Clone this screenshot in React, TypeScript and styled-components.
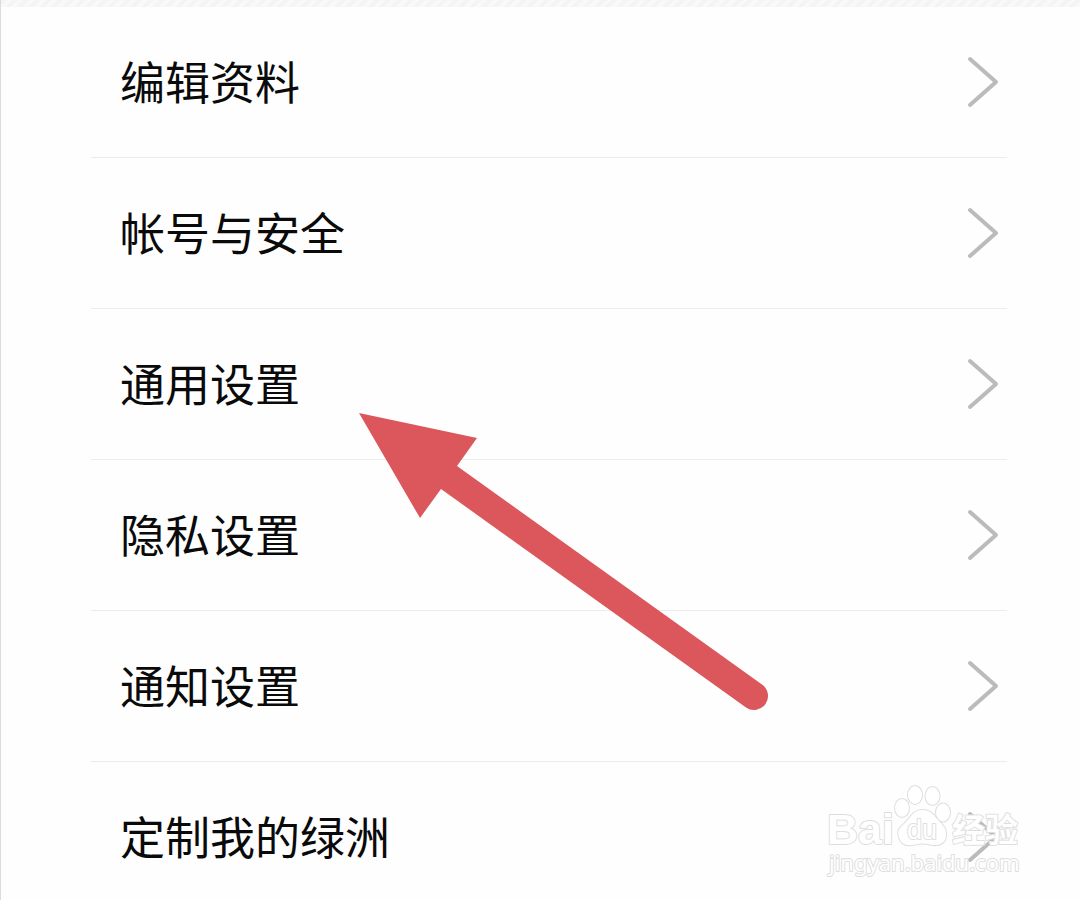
import React from "react";
import styled, { createGlobalStyle } from "styled-components";

const GlobalStyle = createGlobalStyle`
  *, *::before, *::after { box-sizing: border-box; }
  body {
    margin: 0;
    background: #fefefe;
    color: #0a0a0a;
    font-family: "Noto Sans CJK SC", sans-serif;
  }
`;

const Page = styled.main`
  position: relative;
  height: 100vh;
  overflow: hidden;
  border-left: 1px solid #dcdcdc;
`;

const HatchedStrip = styled.div`
  height: 7px;
  background: repeating-linear-gradient(135deg, #f4f4f4 0 4px, #f9f9f9 4px 8px);
`;

const SettingsList = styled.ul`
  list-style: none;
  margin: 0;
  padding: 0 73px 0 90px;
`;

const SettingsItem = styled.li`
  border-bottom: 1px solid #ebeded;
`;

const SettingsLink = styled.a`
  display: flex;
  align-items: center;
  justify-content: space-between;
  height: 150px;
  padding: 0 8px 0 29px;
  color: inherit;
  font-size: 45px;
  line-height: 66px;
  text-decoration: none;
`;

const Label = styled.span`
  padding-bottom: 2px;
`;

const Chevron = styled.svg`
  flex: none;
  width: 32px;
  height: 52px;
  fill: none;
  stroke: #bbbbbb;
  stroke-width: 4;
  stroke-linecap: round;
  stroke-linejoin: round;
`;

const Pointer = styled.svg`
  position: absolute;
  left: 357px;
  top: 412px;
  width: 412px;
  height: 300px;
  fill: #db575c;
  pointer-events: none;
`;

const Watermark = styled.svg`
  position: absolute;
  right: 50px;
  bottom: 16px;
  width: 210px;
  height: 104px;
  fill: #ffffff;
  stroke: #dedede;
  stroke-width: 2;
  stroke-linejoin: round;
  paint-order: stroke;
  pointer-events: none;
`;

const BrandText = styled.text`
  font: 700 43px "Liberation Sans", sans-serif;
`;

const PawText = styled.text`
  font: 400 27px "Liberation Sans", sans-serif;
`;

const TopicText = styled.text`
  font: 700 33px "Noto Sans CJK SC", sans-serif;
`;

const DomainText = styled.text`
  font: 400 22px "Noto Sans", sans-serif;
`;

const items = ["编辑资料", "帐号与安全", "通用设置", "隐私设置", "通知设置", "定制我的绿洲"];

export default function App() {
  return (
    <>
      <GlobalStyle />
      <Page>
        <HatchedStrip />
        <SettingsList>
          {items.map((label) => (
            <SettingsItem key={label}>
              <SettingsLink href="#">
                <Label>{label}</Label>
                <Chevron viewBox="0 0 32 52" aria-hidden="true">
                  <path d="M3 3 L29 26 L3 49" />
                </Chevron>
              </SettingsLink>
            </SettingsItem>
          ))}
        </SettingsList>
        <Pointer viewBox="0 0 412 300" aria-hidden="true">
          <path d="M1 1 L119 26 L99 54 L404 272.5 A14 14 0 0 1 388 295.5 L83 77 L62 106 Z" />
        </Pointer>
        <Watermark viewBox="0 0 210 104" role="img" aria-label="Baidu 经验">
          <BrandText x="7" y="64">Bai</BrandText>
          <ellipse cx="82" cy="28" rx="7" ry="9" />
          <ellipse cx="95" cy="15" rx="7" ry="9" />
          <ellipse cx="112.500" cy="16" rx="7" ry="9" />
          <ellipse cx="123" cy="32.500" rx="7" ry="9" />
          <path d="M102 30 C93 30 90 38 85 43 C79 48 77 51 79 57 C81 66 89 66 95 64.500 C101 63 105 63 110 64.500 C117 66 124 65 126 57 C127 50 124 46 119 41 C114 36 112 30 102 30 Z" />
          <PawText x="87" y="59">du</PawText>
          <TopicText x="132" y="62">经验</TopicText>
          <DomainText x="9" y="91">jingyan.baidu.com</DomainText>
        </Watermark>
      </Page>
    </>
  );
}
